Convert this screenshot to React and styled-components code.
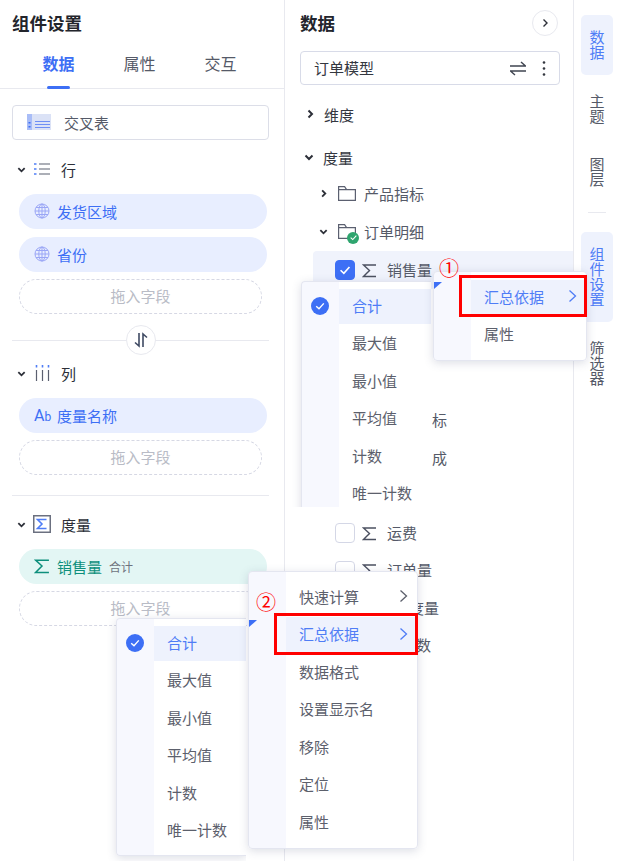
import styled, { createGlobalStyle } from 'styled-components';

const GlobalStyle = createGlobalStyle`
    html, body {
        margin: 0;
        padding: 0;
        background: #fff;
    }
    body {
        font-family: "Noto Sans CJK SC", "Noto Sans", sans-serif;
        font-size: 15px;
        color: #4b5060;
    }
    * {
        box-sizing: border-box;
    }
`

const BLUE = '#3d6ff5'

const Page = styled.div`
    position: relative;
    display: flex;
    width: 620px;
    height: 861px;
    overflow: hidden;
    background: #fff;
`

const LeftPanel = styled.section`
    width: 285px;
    flex: none;
    border-right: 1px solid #e8e9ef;
`

const DataPanel = styled.section`
    width: 289px;
    flex: none;
    border-right: 1px solid #e8e9ef;
    padding-left: 15px;
`

const Rail = styled.nav`
    flex: 1;
    padding: 15px 7px 0;
    display: flex;
    flex-direction: column;
`

const Title = styled.h2`
    margin: 0;
    height: 48px;
    font-size: 17.5px;
    font-weight: 700;
    line-height: 46px;
    color: #23252c;
`

const LeftTitle = styled(Title)`
    padding-left: 12px;
`

const Tabs = styled.div`
    display: flex;
    height: 41px;
    padding: 0 23px 0 18px;
    border-bottom: 1px solid #e8e9ef;
`

const Tab = styled.div`
    position: relative;
    width: 81px;
    text-align: center;
    font-size: 16px;
    line-height: 30px;
    font-weight: ${p => (p.$active ? 700 : 400)};
    color: ${p => (p.$active ? BLUE : '#555a68')};

    &::after {
        content: '';
        display: ${p => (p.$active ? 'block' : 'none')};
        position: absolute;
        left: 29px;
        bottom: -1px;
        width: 23px;
        height: 3px;
        border-radius: 2px;
        background: ${BLUE};
    }
`

const LeftBody = styled.div`
    padding: 16px 15px 0 12px;
`

const ChartSelect = styled.div`
    display: flex;
    align-items: center;
    gap: 13px;
    height: 35px;
    padding: 0 0 1px 14px;
    border: 1px solid #dcdee8;
    border-radius: 4px;
    font-size: 15px;
    color: #555a68;
`

const SectionHead = styled.div`
    display: flex;
    align-items: center;
    height: 24px;
    margin: ${p => p.$top}px 0 12px;
    padding: 0 0 2px 5px;
    font-size: 15px;
    color: #2c2f38;
`

const HeadIcon = styled.span`
    display: flex;
    justify-content: center;
    width: 26px;
    margin: 0 6px 0 3px;
`

const Pills = styled.div`
    display: flex;
    flex-direction: column;
    gap: 8px;
    padding-left: 7px;
`

const Pill = styled.div`
    display: flex;
    align-items: center;
    gap: 7px;
    width: 248px;
    height: 35px;
    padding: 0 0 1px 15px;
    border-radius: 18px;
    background: ${p => (p.$measure ? '#e3f6f4' : '#e8eeff')};
    color: ${p => (p.$measure ? '#0e8f7c' : BLUE)};
    font-size: 15px;
`

const PillNote = styled.span`
    margin: 1px 0 0 0;
    font-size: 12px;
    color: #6f737e;
`

const AbIcon = styled.span`
    width: 16px;
    font-family: Roboto, sans-serif;
    font-size: 16px;

    small {
        font-size: 12px;
    }
`

const DropZone = styled.div`
    width: 243px;
    height: 35px;
    margin-top: -1px;
    border: 1px dashed #d6d8e4;
    border-radius: 18px;
    text-align: center;
    line-height: 31px;
    font-size: 15px;
    color: #b9bcc6;
`

const Divider = styled.div`
    position: relative;
    height: 1px;
    margin-top: ${p => p.$top}px;
    background: #e8e9ef;
`

const SwapButton = styled.div`
    position: absolute;
    left: 114px;
    top: -15px;
    display: flex;
    align-items: center;
    justify-content: center;
    width: 30px;
    height: 30px;
    border: 1px solid #e8e9ef;
    border-radius: 50%;
    background: #fff;
`

const DataHead = styled.div`
    display: flex;
    align-items: center;
    justify-content: space-between;
    height: 51px;
    padding-bottom: 5px;
    padding-right: 15px;
`

const DataTitle = styled(Title)`
    height: auto;
`

const CircleButton = styled.div`
    display: flex;
    align-items: center;
    justify-content: center;
    width: 26px;
    height: 26px;
    border: 1px solid #e8e9ef;
    border-radius: 50%;
`

const ModelSelect = styled.div`
    display: flex;
    align-items: center;
    width: 260px;
    height: 34px;
    padding: 0 13px 0 13px;
    border: 1px solid #d8dbe8;
    border-radius: 4px;
    font-size: 15px;
    color: #34373f;
`

const ModelName = styled.span`
    flex: 1;
    margin-bottom: 2px;
`

const Tree = styled.div`
    padding-top: 11px;
`

const GroupRow = styled.div`
    display: flex;
    align-items: center;
    height: 38px;
    margin-top: ${p => p.$top || 0}px;
    padding: 0 0 2px ${p => p.$indent}px;
    font-size: 15px;
    color: #34373f;
`

const GroupName = styled.span`
    margin-left: ${p => p.$gap}px;
`

const SubRows = styled.div`
    margin-top: -2px;
`

const SubRow = styled.div`
    display: flex;
    align-items: center;
    height: 38px;
    padding: 0 0 2px 19px;
    font-size: 15px;
    color: #555a68;
`

const FolderWrap = styled.span`
    position: relative;
    display: flex;
    width: 20px;
    margin: 0 6px 0 10px;
`

const FolderBadge = styled.span`
    position: absolute;
    right: -1px;
    bottom: -5px;
    display: flex;
    align-items: center;
    justify-content: center;
    width: 12px;
    height: 12px;
    border-radius: 50%;
    background: #2fa56f;
`

const FieldRow = styled.div`
    display: flex;
    align-items: center;
    width: 260px;
    height: ${p => (p.$active ? 38 : 37.57)}px;
    margin-left: 13px;
    padding-left: 22px;
    border-radius: 4px 0 0 0;
    background: ${p => (p.$active ? '#f0f3fc' : 'transparent')};
    font-size: 15px;
    color: #555a68;
`

const Check = styled.span`
    display: flex;
    align-items: center;
    justify-content: center;
    width: 20px;
    height: 20px;
    flex: none;
    border-radius: 4px;
    border: 1px solid ${p => (p.$on ? BLUE : '#d4d7e6')};
    background: ${p => (p.$on ? BLUE : '#fff')};
`

const SigmaSlot = styled.span`
    display: flex;
    margin-left: 7px;
`

const FieldName = styled.span`
    margin: 0 0 2px ${p => p.$gap || 10}px;
`

const RailItem = styled.div`
    width: 32px;
    margin-bottom: 3.5px;
    padding: 14px 8px 16px;
    border-radius: 5px;
    background: ${p => (p.$active ? '#eef2fd' : 'transparent')};
    color: ${p => (p.$active ? '#4f7df6' : '#555a68')};
    font-size: 15px;
    line-height: 15px;
    text-align: center;
    word-break: break-all;
`

const RailLine = styled.div`
    width: 18px;
    height: 1px;
    margin: 6.5px 0 19px 7px;
    background: #e8e9ef;
`

// floating menus sit on top of the panels at their own places
const Menu = styled.div`
    position: absolute;
    left: ${p => p.$x}px;
    top: ${p => p.$y}px;
    width: ${p => p.$w}px;
    padding: ${p => p.$pad}px 0;
    border: 1px solid #e4e6f0;
    border-radius: 4px;
    background: linear-gradient(90deg, #f7f8fe 0, #f7f8fe 37px, #fff 37px);
    box-shadow: 0 2px 10px rgba(60, 70, 110, 0.18);
    z-index: ${p => p.$z || 5};
`

const AggMenu = styled(Menu)`
    border-right: none;
    border-radius: 4px 0 0 4px;
    clip-path: inset(-14px 0 ${p => p.$cut || -14}px -14px);
`

const MenuItem = styled.div`
    position: relative;
    display: flex;
    align-items: center;
    justify-content: space-between;
    height: 37.5px;
    margin-left: 37px;
    padding: 0 9px 2px 13px;
    font-size: 15px;
    color: ${p => (p.$active ? '#4f7df6' : '#5c606c')};
`

const MenuItemBg = styled.span`
    position: absolute;
    inset: 1px 0 1px 0;
    background: #eef2fd;
    z-index: -1;
`

const MenuStack = styled.div`
    position: relative;
    z-index: 0;
`

const CheckDot = styled.span`
    position: absolute;
    left: -28px;
    top: 9px;
    display: flex;
    align-items: center;
    justify-content: center;
    width: 18px;
    height: 18px;
    border-radius: 50%;
    background: ${BLUE};
`

const Corner = styled.span`
    position: absolute;
    left: 0;
    top: ${p => p.$top}px;
    width: 8px;
    height: 7px;
    background: ${BLUE};
    clip-path: polygon(0 0, 100% 0, 0 100%);
`

const RedBox = styled.div`
    position: absolute;
    left: ${p => p.$x}px;
    top: ${p => p.$y}px;
    width: ${p => p.$w}px;
    height: 42px;
    border: 3px solid #f00;
    z-index: 8;
`

const Mark = styled.span`
    position: absolute;
    left: ${p => p.$x}px;
    top: ${p => p.$y}px;
    width: 18px;
    text-align: center;
    font-size: 20px;
    line-height: 18px;
    color: #f00;
    z-index: 8;
`

const Chevron = ({ dir = 'right', size = 10, color = '#2c2f38', width = 2 }) => (
    <svg width={size} height={size} viewBox="0 0 10 10" fill="none" stroke={color} strokeWidth={width}>
        {dir === 'right'
            ? <path d="M3.5 1.5 7 5 3.5 8.5" />
            : <path d="M1.5 3.5 5 7l3.5-3.5" />}
    </svg>
)

const MenuArrow = ({ color }) => (
    <svg width="9" height="14" viewBox="0 0 9 14" fill="none" stroke={color} strokeWidth="1.3">
        <path d="M1.5 1.5 7.5 7l-6 5.5" />
    </svg>
)

const Tick = ({ size = 12 }) => (
    <svg width={size} height={size} viewBox="0 0 12 12" fill="none" stroke="#fff" strokeWidth="1.4">
        <path d="M2.2 6.2 5 8.8l4.8-5.4" />
    </svg>
)

const Sigma = ({ color = '#4b5060', size = 15 }) => (
    <svg width={size} height={size} viewBox="0 0 15 15" fill="none" stroke={color} strokeWidth="1.4">
        <path d="M14 2H1.5l6 5.5-6 6H14" />
    </svg>
)

const Globe = () => (
    <svg width="16" height="16" viewBox="0 0 16 16" fill="none" stroke="#9aa6f6" strokeWidth="1">
        <circle cx="8" cy="8" r="7" />
        <ellipse cx="8" cy="8" rx="3.2" ry="7" />
        <path d="M8 1v14M1 8h14M2 4.5h12M2 11.5h12" />
    </svg>
)

const TableIcon = () => (
    <svg width="24" height="16" viewBox="0 0 24 16">
        <rect width="24" height="16" fill="#dbe2f6" />
        <rect width="5" height="16" fill="#a9bdf7" />
        <rect x="1.5" y="8" width="2" height="1.5" fill="#3d6ff5" />
        <rect x="1.5" y="12" width="2" height="1.5" fill="#3d6ff5" />
        <path d="M8 7.5h15M8 10.5h15M8 13.5h15" stroke="#6f8ff5" strokeWidth="1.2" />
    </svg>
)

const ListIcon = () => (
    <svg width="16" height="14" viewBox="0 0 16 14">
        <path d="M5 2h11M5 7h11M5 12h11" stroke="#5b6070" strokeWidth="1.2" />
        <path d="M0 2h2.5M0 7h2.5M0 12h2.5" stroke="#4f7df6" strokeWidth="1.6" />
    </svg>
)

const ColumnIcon = () => (
    <svg width="15" height="16" viewBox="0 0 15 16">
        <path d="M1.5 5v11M7.5 5v11M13.5 5v11" stroke="#5b6070" strokeWidth="1.2" />
        <path d="M1.5 0v2.5M7.5 0v2.5M13.5 0v2.5" stroke="#4f7df6" strokeWidth="1.6" />
    </svg>
)

const SigmaBox = () => (
    <svg width="18" height="18" viewBox="0 0 18 18" fill="none">
        <rect x="0.75" y="0.75" width="16.5" height="16.5" stroke="#6b7080" strokeWidth="1.5" />
        <path d="M13.5 4.5H4.5L9 9l-4.5 4.5h9" stroke="#4f7df6" strokeWidth="1.6" />
    </svg>
)

const SortIcon = () => (
    <svg width="16" height="16" viewBox="0 0 16 16" fill="none" stroke="#3f4a63" strokeWidth="1.6">
        <path d="M6 1v13L2 10.5M10 15V2l4 3.5" />
    </svg>
)

const SwitchIcon = () => (
    <svg width="16" height="15" viewBox="0 0 16 15" fill="none" stroke="#3f4450" strokeWidth="1.4">
        <path d="M0 5h15.5L11 1M16 10H.5L5 14" />
    </svg>
)

const Kebab = styled.svg`
    margin-left: 16px;
`

const KebabIcon = () => (
    <Kebab width="4" height="15" viewBox="0 0 4 15" fill="#34373f">
        <circle cx="2" cy="1.5" r="1.3" />
        <circle cx="2" cy="7.5" r="1.3" />
        <circle cx="2" cy="13.5" r="1.3" />
    </Kebab>
)

const FolderIcon = () => (
    <svg width="18" height="15" viewBox="0 0 18 15" fill="none" stroke="#5b6070" strokeWidth="1.2">
        <path d="M.6 14.4V.6h6l2 3h8.8v10.8zM.6 3.6h8" />
    </svg>
)

const aggregates = ['合计', '最大值', '最小值', '平均值', '计数', '唯一计数']
const fieldActions = ['快速计算', '汇总依据', '数据格式', '设置显示名', '移除', '定位', '属性']

const AggregateMenu = ({ x, y, cut }) => (
    <AggMenu $x={x} $y={y} $w={130} $pad={5.5} $cut={cut}>
        <MenuStack>
            {aggregates.map((name, i) => (
                <MenuItem key={name} $active={i === 0}>
                    {i === 0 && <MenuItemBg />}
                    {i === 0 && <CheckDot><Tick /></CheckDot>}
                    {name}
                </MenuItem>
            ))}
        </MenuStack>
    </AggMenu>
)

const Field = ({ name, active }) => (
    <FieldRow $active={active}>
        <Check $on={active}>{active && <Tick size={14} />}</Check>
        <SigmaSlot><Sigma /></SigmaSlot>
        <FieldName>{name}</FieldName>
    </FieldRow>
)

const App = () => {
    return (
        <Page>
            <GlobalStyle />
            <LeftPanel>
                <LeftTitle>组件设置</LeftTitle>
                <Tabs>
                    <Tab $active>数据</Tab>
                    <Tab>属性</Tab>
                    <Tab>交互</Tab>
                </Tabs>
                <LeftBody>
                    <ChartSelect><TableIcon />交叉表</ChartSelect>

                    <SectionHead $top={18}>
                        <Chevron dir="down" size={9} />
                        <HeadIcon><ListIcon /></HeadIcon>行
                    </SectionHead>
                    <Pills>
                        <Pill><Globe />发货区域</Pill>
                        <Pill><Globe />省份</Pill>
                        <DropZone>拖入字段</DropZone>
                    </Pills>
                    <Divider $top={26}><SwapButton><SortIcon /></SwapButton></Divider>

                    <SectionHead $top={21}>
                        <Chevron dir="down" size={9} />
                        <HeadIcon><ColumnIcon /></HeadIcon>列
                    </SectionHead>
                    <Pills>
                        <Pill><AbIcon>A<small>b</small></AbIcon>度量名称</Pill>
                        <DropZone>拖入字段</DropZone>
                    </Pills>
                    <Divider $top={20} />

                    <SectionHead $top={17}>
                        <Chevron dir="down" size={9} />
                        <HeadIcon><SigmaBox /></HeadIcon>度量
                    </SectionHead>
                    <Pills>
                        <Pill $measure>
                            <Sigma color="#0e8f7c" size={16} />销售量<PillNote>合计</PillNote>
                        </Pill>
                        <DropZone>拖入字段</DropZone>
                    </Pills>
                </LeftBody>
            </LeftPanel>

            <DataPanel>
                <DataHead>
                    <DataTitle>数据</DataTitle>
                    <CircleButton><Chevron size={10} width={1.4} /></CircleButton>
                </DataHead>
                <ModelSelect>
                    <ModelName>订单模型</ModelName>
                    <SwitchIcon />
                    <KebabIcon />
                </ModelSelect>
                <Tree>
                    <GroupRow $indent={5}>
                        <Chevron size={10} />
                        <GroupName $gap={9}>维度</GroupName>
                    </GroupRow>
                    <GroupRow $indent={4} $top={5}>
                        <Chevron dir="down" size={10} />
                        <GroupName $gap={9}>度量</GroupName>
                    </GroupRow>
                    <SubRows>
                        <SubRow>
                            <Chevron size={9} />
                            <FolderWrap><FolderIcon /></FolderWrap>产品指标
                        </SubRow>
                        <SubRow>
                            <Chevron dir="down" size={9} />
                            <FolderWrap>
                                <FolderIcon />
                                <FolderBadge><Tick size={9} /></FolderBadge>
                            </FolderWrap>订单明细
                        </SubRow>
                        <Field name="销售量" active />
                        <FieldRow />
                        <FieldRow />
                        <FieldRow />
                        <FieldRow><FieldName $gap={97}>标</FieldName></FieldRow>
                        <FieldRow><FieldName $gap={97}>成</FieldName></FieldRow>
                        <FieldRow />
                        <Field name="运费" />
                        <Field name="订单量" />
                        <FieldRow><FieldName $gap={74}>度量</FieldName></FieldRow>
                        <FieldRow><FieldName $gap={81}>数</FieldName></FieldRow>
                    </SubRows>
                </Tree>
            </DataPanel>

            <Rail>
                <RailItem $active>数据</RailItem>
                <RailItem>主题</RailItem>
                <RailItem>图层</RailItem>
                <RailLine />
                <RailItem $active>组件设置</RailItem>
                <RailItem>筛选器</RailItem>
            </Rail>

            <AggregateMenu x={301} y={281} cut={12} />
            <Menu $x={433} $y={271} $w={154} $pad={6.5}>
                <Corner $top={10} />
                <MenuStack>
                    <MenuItem $active><MenuItemBg />汇总依据<MenuArrow color="#4f7df6" /></MenuItem>
                    <MenuItem>属性</MenuItem>
                </MenuStack>
            </Menu>

            <AggregateMenu x={116} y={618} />
            <Menu $x={248} $y={571} $w={170} $pad={6.5} $z={6}>
                <Corner $top={48} />
                <MenuStack>
                    {fieldActions.map((name, i) => (
                        <MenuItem key={name} $active={i === 1}>
                            {i === 1 && <MenuItemBg />}
                            {name}
                            {i < 2 && <MenuArrow color={i === 1 ? '#4f7df6' : '#5c606c'} />}
                        </MenuItem>
                    ))}
                </MenuStack>
            </Menu>

            <RedBox $x={459} $y={275} $w={128} />
            <RedBox $x={274} $y={613} $w={144} />
            <Mark $x={439} $y={259}>①</Mark>
            <Mark $x={256} $y={593}>②</Mark>
        </Page>
    )
}

export default App;
